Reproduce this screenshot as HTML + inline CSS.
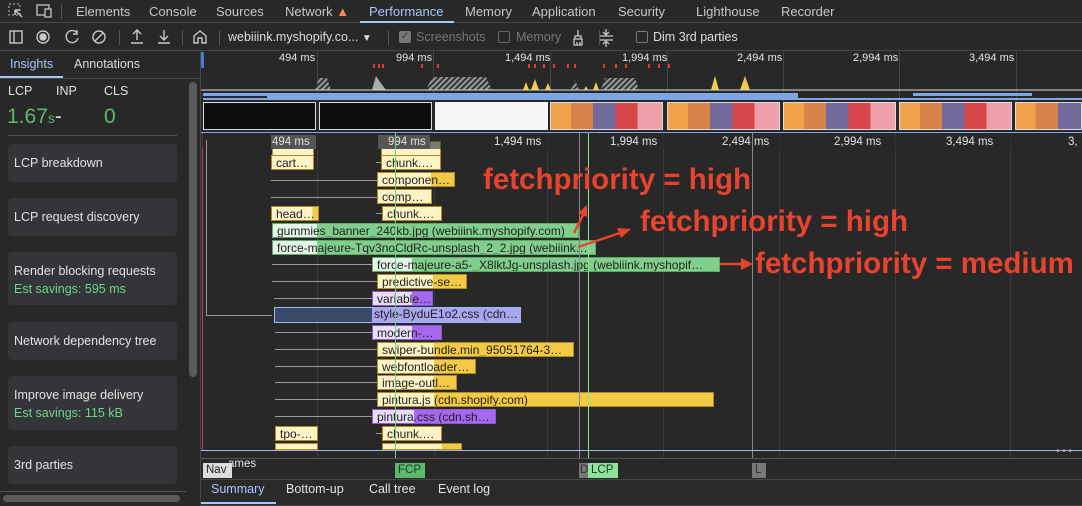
<!DOCTYPE html>
<html><head><meta charset="utf-8"><style>
*{margin:0;padding:0;box-sizing:border-box}
body{width:1082px;height:506px;background:#282828;font-family:"Liberation Sans",sans-serif;color:#e3e3e3;overflow:hidden;position:relative;font-size:12px}
.a{position:absolute;white-space:nowrap}
.tab{position:absolute;top:4px;font-size:13px;color:#c7c7c7}
.card{position:absolute;left:8px;width:169px;background:#333539;border-radius:4px;font-size:12.5px;color:#e3e3e3;padding-left:6px}
.card .s{color:#6dd58c;margin-top:4px}
.bar{position:absolute;height:15px;font-size:12px;color:#222;padding-left:4px;line-height:14px;overflow:hidden;border:1px solid #b08a25}
.y{background:linear-gradient(90deg,#fdf3c7 var(--l),#f3ca45 var(--l))}
.g{background:linear-gradient(90deg,#e5f5e7 var(--l),#80cf8c var(--l));border-color:#5ea868}
.p{background:linear-gradient(90deg,#eadcfd var(--l),#a668ee var(--l));border-color:#8c5ad0}
.w{position:absolute;height:1px;background:#999}
.vl{position:absolute;width:1px}
.ann{position:absolute;font-weight:bold;font-size:29.5px;color:#e8432e;white-space:nowrap}
.cb{position:absolute;width:12px;height:12px;border:1.5px solid #777;border-radius:2px}
</style></head><body>
<!-- tab bar -->
<div class="a" style="left:0;top:0;width:1082px;height:23px;background:#282828;border-bottom:1px solid #474747"></div>
<svg class="a" style="left:8px;top:3px" width="50" height="16"><rect x="1" y="1" width="11" height="11" fill="none" stroke="#bbb" stroke-dasharray="2,2"/><path d="M7 7l7 7M7 7h5M7 7v5" stroke="#ccc" stroke-width="1.5" fill="none"/><rect x="29" y="2" width="12" height="10" fill="none" stroke="#bbb" stroke-width="1.4"/><rect x="37" y="6" width="6" height="8" fill="#282828" stroke="#bbb" stroke-width="1.4"/></svg>
<div class="a" style="left:61px;top:4px;width:1px;height:15px;background:#555"></div>
<div class="tab" style="left:76px">Elements</div>
<div class="tab" style="left:149px">Console</div>
<div class="tab" style="left:216px">Sources</div>
<div class="tab" style="left:285px">Network <span style="color:#f28b54">▲</span></div>
<div class="tab" style="left:369px;color:#a8c7fa">Performance</div>
<div class="a" style="left:360px;top:21px;width:94px;height:2px;background:#a8c7fa"></div>
<div class="tab" style="left:465px">Memory</div>
<div class="tab" style="left:532px">Application</div>
<div class="tab" style="left:618px">Security</div>
<div class="tab" style="left:696px">Lighthouse</div>
<div class="tab" style="left:781px">Recorder</div>
<!-- toolbar -->
<div class="a" style="left:0;top:50px;width:1082px;height:1px;background:#474747"></div>
<svg class="a" style="left:0;top:24px" width="230" height="26" stroke="#c7c7c7" fill="none" stroke-width="1.4"><rect x="10" y="7" width="12" height="12"/><path d="M14 7v12"/><circle cx="43" cy="13" r="6"/><circle cx="43" cy="13" r="3" fill="#c7c7c7"/><path d="M77 9a6 6 0 1 0 1 5M77 6v4h-4"/><circle cx="99" cy="13" r="6"/><path d="M95 17l8-8"/><path d="M137 16v-10M133 10l4-4 4 4M131 19h12M164 6v10M160 12l4 4 4-4M158 19h12"/><path d="M194 19v-7l6-5 6 5v7h-4v-5h-4v5z"/></svg>
<div class="a" style="left:119px;top:30px;width:1px;height:15px;background:#555"></div>
<div class="a" style="left:182px;top:30px;width:1px;height:15px;background:#555"></div>
<div class="a" style="left:219px;top:30px;width:1px;height:15px;background:#555"></div>
<div class="a" style="left:228px;top:30px;font-size:12.5px;color:#ddd">webiiink.myshopify.co... <span style="font-size:10px">▼</span></div>
<div class="a" style="left:388px;top:30px;width:1px;height:15px;background:#555"></div>
<div class="a" style="left:399px;top:31px;width:12px;height:12px;background:#777;border-radius:2px;color:#333;font-size:10px;line-height:12px;text-align:center">✓</div>
<div class="a" style="left:416px;top:30px;font-size:12.5px;color:#777">Screenshots</div>
<div class="cb" style="left:498px;top:31px;border-color:#666"></div>
<div class="a" style="left:516px;top:30px;font-size:12.5px;color:#777">Memory</div>
<svg class="a" style="left:572px;top:28px" width="60" height="20" stroke="#c7c7c7" fill="none" stroke-width="1.3"><path d="M6 2v6M3 8h6v3H3zM2 11h8v6H2zM5 14v3M8 14v3"/><path d="M27 8h14M27 12h14M34 1v5M31 4l3 3 3-3M34 19v-5M31 16l3-3 3 3"/></svg>
<div class="a" style="left:599px;top:30px;width:1px;height:15px;background:#555"></div>
<div class="cb" style="left:636px;top:31px"></div>
<div class="a" style="left:653px;top:30px;font-size:12.5px;color:#ddd">Dim 3rd parties</div>
<!-- left panel -->
<div class="a" style="left:200px;top:51px;width:1px;height:455px;background:#474747"></div>
<div class="a" style="left:10px;top:57px;font-size:12.5px;color:#a8c7fa">Insights</div>
<div class="a" style="left:74px;top:57px;font-size:12.5px;color:#ddd">Annotations</div>
<div class="a" style="left:0;top:76px;width:63px;height:2px;background:#a8c7fa"></div>
<div class="a" style="left:0;top:78px;width:200px;height:1px;background:#474747"></div>
<div class="a" style="left:8px;top:84px;font-size:12.5px">LCP</div>
<div class="a" style="left:56px;top:84px;font-size:12.5px">INP</div>
<div class="a" style="left:104px;top:84px;font-size:12.5px">CLS</div>
<div class="a" style="left:7px;top:105px;font-size:21px;color:#5bb974">1.67<span style="font-size:14px">s</span><span style="color:#ddd">-</span></div>
<div class="a" style="left:104px;top:105px;font-size:21px;color:#5bb974">0</div>
<div class="a" style="left:8px;top:135px;width:169px;height:1px;background:#555"></div>
<div class="a" style="left:189px;top:82px;width:8px;height:295px;background:#5a5a5a;border-radius:4px"></div>
<div class="card" style="top:144px;height:38px;line-height:38px">LCP breakdown</div>
<div class="card" style="top:198px;height:38px;line-height:38px">LCP request discovery</div>
<div class="card" style="top:252px;height:53px;padding-top:12px">Render blocking requests<div class="s">Est savings: 595 ms</div></div>
<div class="card" style="top:322px;height:38px;line-height:38px">Network dependency tree</div>
<div class="card" style="top:376px;height:54px;padding-top:12px">Improve image delivery<div class="s">Est savings: 115 kB</div></div>
<div class="card" style="top:446px;height:38px;line-height:38px">3rd parties</div>
<div class="a" style="left:0;top:491px;width:186px;height:1px;background:#555"></div>
<div class="a" style="left:3px;top:495px;width:177px;height:7px;background:#5a5a5a;border-radius:4px"></div>
<!-- overview -->
<div class="a" style="left:201px;top:51px;width:881px;height:82px;background:#282828"></div>
<div class="a" style="left:201px;top:52px;width:3px;height:16px;background:#4a7bd0;border-radius:1px"></div>
<div class="vl" style="left:317px;top:51px;height:50px;background:#444"></div>
<div class="vl" style="left:433px;top:51px;height:50px;background:#444"></div>
<div class="vl" style="left:550px;top:51px;height:50px;background:#444"></div>
<div class="vl" style="left:667px;top:51px;height:50px;background:#444"></div>
<div class="vl" style="left:783px;top:51px;height:50px;background:#444"></div>
<div class="vl" style="left:899px;top:51px;height:50px;background:#444"></div>
<div class="vl" style="left:1016px;top:51px;height:50px;background:#444"></div>
<div class="a" style="left:279px;top:52px;font-size:11px">494 ms</div>
<div class="a" style="left:396px;top:52px;font-size:11px">994 ms</div>
<div class="a" style="left:505px;top:52px;font-size:11px">1,494 ms</div>
<div class="a" style="left:622px;top:52px;font-size:11px">1,994 ms</div>
<div class="a" style="left:737px;top:52px;font-size:11px">2,494 ms</div>
<div class="a" style="left:853px;top:52px;font-size:11px">2,994 ms</div>
<div class="a" style="left:969px;top:52px;font-size:11px">3,494 ms</div>
<svg class="a" style="left:201px;top:62px" width="881" height="30">
<defs><pattern id="h" width="4" height="4" patternUnits="userSpaceOnUse" patternTransform="rotate(45)"><rect width="4" height="4" fill="#333"/><rect width="2" height="4" fill="#999"/></pattern></defs>
<g fill="#e53935"><rect x="172" y="2" width="2" height="4"/><rect x="177" y="2" width="2" height="4"/><rect x="181" y="2" width="2" height="4"/><rect x="220" y="2" width="2" height="4"/><rect x="236" y="2" width="2" height="4"/><rect x="327" y="2" width="2" height="4"/><rect x="333" y="2" width="2" height="4"/><rect x="342" y="2" width="2" height="4"/><rect x="352" y="2" width="2" height="4"/><rect x="366" y="2" width="2" height="4"/><rect x="373" y="2" width="2" height="4"/><rect x="402" y="2" width="2" height="4"/><rect x="414" y="2" width="2" height="4"/><rect x="424" y="2" width="2" height="4"/><rect x="447" y="2" width="2" height="4"/><rect x="457" y="2" width="2" height="4"/><rect x="467" y="2" width="2" height="4"/></g>
<path d="M114 28l4-12 8 0 4 12zM225 28l6-13 54 0 6 13z" fill="url(#h)"/>
<path d="M171 28l4-14 4 6 6 8z" fill="#aaa"/>
<path d="M322 28l3-8 3 8zM330 28l4-11 4 11zM344 28l3-7 3 7zM383 28l2-4 2 4zM392 28l3-8 3 8zM412 28l3-7 3 7zM510 28l4-14 4 14zM539 28l5-14 5 14z" fill="#f3ca45"/>
<path d="M400 28l4-12 30 0 4 12zM370 28l4-10 4 10z" fill="url(#h)"/>
<path d="M0 28h881" stroke="#ddd" stroke-width="1"/>
</svg>
<div class="a" style="left:203px;top:93px;width:595px;height:3px;background:#7ea5e6"></div>
<div class="a" style="left:913px;top:93px;width:119px;height:3px;background:#7ea5e6"></div>
<div class="a" style="left:203px;top:98px;width:879px;height:2px;background:#7ea5e6"></div>
<div class="a" style="left:267px;top:96px;width:531px;height:2px;background:#7ea5e6"></div>
<div class="a" style="left:203px;top:102px;width:113px;height:28px;background:#0d0d0d;border:1px solid #ddd"></div>
<div class="a" style="left:319px;top:102px;width:113px;height:28px;background:#0d0d0d;border:1px solid #ddd"></div>
<div class="a" style="left:435px;top:102px;width:113px;height:28px;background:#f6f6f6"></div>
<div class="a" style="left:550px;top:102px;width:113px;height:28px;background:linear-gradient(90deg,#f2a24a 0 18%,#d9834a 18% 38%,#6f6a9a 38% 58%,#d6464a 58% 78%,#ef9fa8 78%);border:1px solid #ddd"></div>
<div class="a" style="left:667px;top:102px;width:113px;height:28px;background:linear-gradient(90deg,#f2a24a 0 18%,#d9834a 18% 38%,#6f6a9a 38% 58%,#d6464a 58% 78%,#ef9fa8 78%);border:1px solid #ddd"></div>
<div class="a" style="left:783px;top:102px;width:113px;height:28px;background:linear-gradient(90deg,#f2a24a 0 18%,#d9834a 18% 38%,#6f6a9a 38% 58%,#d6464a 58% 78%,#ef9fa8 78%);border:1px solid #ddd"></div>
<div class="a" style="left:899px;top:102px;width:113px;height:28px;background:linear-gradient(90deg,#f2a24a 0 18%,#d9834a 18% 38%,#6f6a9a 38% 58%,#d6464a 58% 78%,#ef9fa8 78%);border:1px solid #ddd"></div>
<div class="a" style="left:1015px;top:102px;width:67px;height:28px;background:linear-gradient(90deg,#f2a24a 0 30%,#d9834a 30% 65%,#6f6a9a 65%);border:1px solid #ddd"></div>
<div class="a" style="left:201px;top:132px;width:881px;height:1px;background:#7ea5e6"></div>
<!-- main timeline grid -->
<div class="vl" style="left:317px;top:133px;height:325px;background:#3a3a3a"></div>
<div class="vl" style="left:434px;top:133px;height:325px;background:#3a3a3a"></div>
<div class="vl" style="left:547px;top:133px;height:325px;background:#3a3a3a"></div>
<div class="vl" style="left:663px;top:133px;height:325px;background:#3a3a3a"></div>
<div class="vl" style="left:779px;top:133px;height:325px;background:#3a3a3a"></div>
<div class="vl" style="left:895px;top:133px;height:325px;background:#3a3a3a"></div>
<div class="vl" style="left:1010px;top:133px;height:325px;background:#3a3a3a"></div>
<div class="vl" style="left:202px;top:133px;height:317px;background:#c04070"></div>
<!-- top partial row -->
<div class="bar y" style="--l:100%;left:272px;top:141px;width:42px"></div>
<div class="bar y" style="--l:100%;left:381px;top:141px;width:60px"></div>
<div class="a" style="left:201px;top:134px;width:881px;height:15px;background:rgba(40,40,40,.6)"></div>
<div class="a" style="left:271px;top:135px;width:45px;height:14px;background:#555"></div>
<div class="a" style="left:378px;top:135px;width:52px;height:14px;background:#555"></div>
<div class="a" style="left:272px;top:136px;font-size:11.5px">494 ms</div>
<div class="a" style="left:388px;top:136px;font-size:11.5px">994 ms</div>
<div class="a" style="left:494px;top:136px;font-size:11.5px">1,494 ms</div>
<div class="a" style="left:610px;top:136px;font-size:11.5px">1,994 ms</div>
<div class="a" style="left:722px;top:136px;font-size:11.5px">2,494 ms</div>
<div class="a" style="left:834px;top:136px;font-size:11.5px">2,994 ms</div>
<div class="a" style="left:946px;top:136px;font-size:11.5px">3,494 ms</div>
<div class="a" style="left:1068px;top:136px;font-size:11.5px">3,</div>
<!-- rows -->
<div class="bar y" style="--l:100%;left:271px;top:155px;width:43px">cart…</div>
<div class="w" style="left:376px;top:162px;width:6px"></div><div class="bar y" style="--l:100%;left:381px;top:155px;width:60px">chunk.…</div>
<div class="w" style="left:271px;top:180px;width:106px"></div><div class="bar y" style="--l:70%;left:377px;top:172px;width:78px">componen…</div>
<div class="w" style="left:271px;top:197px;width:106px"></div><div class="bar y" style="--l:100%;left:377px;top:189px;width:55px">comp…</div>
<div class="bar y" style="--l:88%;left:271px;top:206px;width:48px">head…</div>
<div class="w" style="left:376px;top:213px;width:6px"></div><div class="bar y" style="--l:100%;left:382px;top:206px;width:60px">chunk.…</div>
<div class="bar g" style="--l:44px;left:272px;top:223px;width:307px">gummies_banner_240kb.jpg (webiiink.myshopify.com)</div>
<div class="bar g" style="--l:44px;left:272px;top:240px;width:324px">force-majeure-Tqv3noCldRc-unsplash_2_2.jpg (webiiink…</div>
<div class="w" style="left:272px;top:264px;width:100px"></div><div class="bar g" style="--l:39px;left:372px;top:257px;width:348px">force-majeure-a5-_X8lktJg-unsplash.jpg (webiiink.myshopif…</div>
<div class="w" style="left:272px;top:281px;width:105px"></div><div class="bar y" style="--l:55px;left:377px;top:274px;width:90px">predictive-se…</div>
<div class="w" style="left:274px;top:298px;width:98px"></div><div class="bar p" style="--l:39px;left:372px;top:291px;width:61px">variable…</div>
<div class="a" style="left:206px;top:140px;width:1px;height:175px;background:#999"></div>
<div class="w" style="left:206px;top:315px;width:66px"></div>
<div class="a" style="left:274px;top:307px;width:247px;height:16px;border:1.5px solid #9fb8ea;background:linear-gradient(90deg,#394a6a 97px,#a9a5f0 97px);font-size:12px;color:#222;padding-left:99px;line-height:13px">style-ByduE1o2.css (cdn…</div>
<div class="w" style="left:275px;top:332px;width:97px"></div><div class="bar p" style="--l:39px;left:372px;top:325px;width:70px">modern-…</div>
<div class="w" style="left:275px;top:349px;width:102px"></div><div class="bar y" style="--l:56px;left:377px;top:342px;width:197px">swiper-bundle.min_95051764-3…</div>
<div class="w" style="left:275px;top:366px;width:102px"></div><div class="bar y" style="--l:56px;left:377px;top:359px;width:99px">webfontloader…</div>
<div class="w" style="left:275px;top:382px;width:102px"></div><div class="bar y" style="--l:56px;left:377px;top:375px;width:80px">image-outl…</div>
<div class="w" style="left:275px;top:399px;width:102px"></div><div class="bar y" style="--l:56px;left:377px;top:392px;width:337px">pintura.js (cdn.shopify.com)</div>
<div class="w" style="left:275px;top:416px;width:97px"></div><div class="bar p" style="--l:41px;left:372px;top:409px;width:124px">pintura.css (cdn.sh…</div>
<div class="bar y" style="--l:100%;left:275px;top:426px;width:43px">tpo-…</div>
<div class="w" style="left:376px;top:433px;width:6px"></div><div class="bar y" style="--l:100%;left:382px;top:426px;width:60px">chunk.…</div>
<div class="bar y" style="--l:100%;left:275px;top:443px;width:43px;height:7px"></div>
<div class="bar y" style="--l:75%;left:382px;top:443px;width:80px;height:7px"></div>
<!-- markers -->
<div class="vl" style="left:395px;top:133px;height:325px;background:#6fcf7f"></div>
<div class="vl" style="left:579px;top:133px;height:325px;background:#888"></div>
<div class="vl" style="left:588px;top:133px;height:325px;background:#8ee39c"></div>
<div class="vl" style="left:752px;top:133px;height:325px;background:#888"></div>
<div class="a" style="left:201px;top:450px;width:881px;height:1px;background:#9fb8ea"></div>
<div class="a" style="left:201px;top:458px;width:881px;height:1px;background:#555"></div>
<div class="a" style="left:1056px;top:446px;font-size:10px;color:#aaa">• • •</div>
<div class="a" style="left:228px;top:458px;font-size:11.5px">ames</div>
<div class="a" style="left:203px;top:463px;width:29px;height:15px;background:#ddd;color:#222;font-size:11.5px;padding-left:3px;line-height:15px">Nav</div>
<div class="a" style="left:395px;top:463px;width:30px;height:15px;background:#5bb96b;color:#1c3d22;font-size:11.5px;padding-left:3px;line-height:15px">FCP</div>
<div class="a" style="left:579px;top:463px;width:9px;height:15px;background:#777;color:#333;font-size:11.5px;padding-left:1px;line-height:15px">D</div>
<div class="a" style="left:588px;top:463px;width:30px;height:15px;background:#8ee39c;color:#1c3d22;font-size:11.5px;padding-left:3px;line-height:15px">LCP</div>
<div class="a" style="left:752px;top:463px;width:14px;height:15px;background:#777;color:#333;font-size:11.5px;padding-left:3px;line-height:15px">L</div>
<!-- bottom tabs -->
<div class="a" style="left:201px;top:479px;width:881px;height:27px;background:#2a2a2a;border-top:1px solid #474747"></div>
<div class="a" style="left:211px;top:482px;font-size:12.5px;color:#a8c7fa">Summary</div>
<div class="a" style="left:201px;top:502px;width:75px;height:2px;background:#a8c7fa"></div>
<div class="a" style="left:286px;top:482px;font-size:12.5px">Bottom-up</div>
<div class="a" style="left:369px;top:482px;font-size:12.5px">Call tree</div>
<div class="a" style="left:438px;top:482px;font-size:12.5px">Event log</div>
<div class="a" style="left:201px;top:505px;width:881px;height:1px;background:#474747"></div>
<!-- annotations -->
<div class="ann" style="left:483px;top:163px">fetchpriority = high</div>
<div class="ann" style="left:640px;top:205px">fetchpriority = high</div>
<div class="ann" style="left:755px;top:247px">fetchpriority = medium</div>
<svg class="a" style="left:560px;top:195px" width="200" height="80" fill="#e8432e" stroke="#e8432e" stroke-width="2.5">
<path d="M14 38L24 18"/><path d="M27 10l-9 8 9 4z" stroke="none"/>
<path d="M18 52L60 38"/><path d="M71 34l-14-1 4 10z" stroke="none"/>
<path d="M160 69h22"/><path d="M193 69l-12-6v12z" stroke="none"/>
</svg>
</body></html>
